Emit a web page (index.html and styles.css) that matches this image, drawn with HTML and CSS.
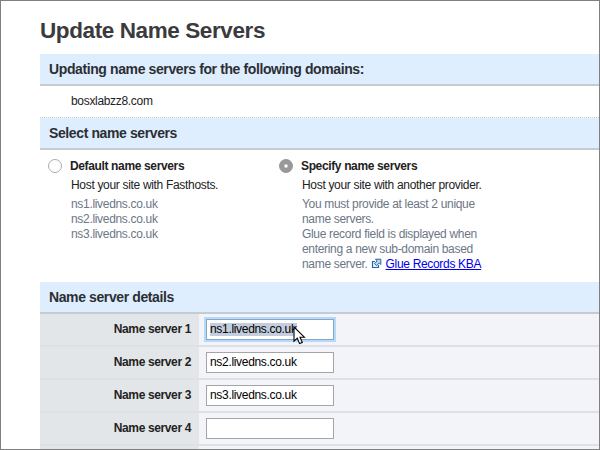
FILE: index.html
```html
<!DOCTYPE html>
<html lang="en">
<head>
<meta charset="utf-8">
<title>Update Name Servers</title>
<link rel="stylesheet" href="styles.css">
</head>
<body>
<main class="page">
  <h1 class="title">Update Name Servers</h1>
  <h2 class="section">Updating name servers for the following domains:</h2>
  <p class="domain">bosxlabzz8.com</p>
  <h2 class="section">Select name servers</h2>
  <div class="choices">
    <div class="choice choice-default">
      <span class="radio"></span>
      <div class="choice-body">
        <h3 class="choice-title">Default name servers</h3>
        <p class="lead">Host your site with Fasthosts.</p>
        <p class="note">ns1.livedns.co.uk<br>ns2.livedns.co.uk<br>ns3.livedns.co.uk</p>
      </div>
    </div>
    <div class="choice">
      <span class="radio radio-on"></span>
      <div class="choice-body">
        <h3 class="choice-title">Specify name servers</h3>
        <p class="lead">Host your site with another provider.</p>
        <p class="note">You must provide at least 2 unique<br>name servers.<br>Glue record field is displayed when<br>entering a new sub-domain based<br>name server. <svg class="ext" viewBox="0 0 11 11"><path d="M4 3.5H1.5v6h6V7" fill="#e4f0fa" stroke="#2864a8" stroke-width="1.2"/><path d="M4.5 1.2h5.3v5.3L8.2 5 5.6 7.6 3.6 5.6 6.2 3z" fill="#b8d8f0" stroke="#2864a8"/></svg><a class="link" href="#">Glue Records KBA</a></p>
      </div>
    </div>
  </div>
  <h2 class="section">Name server details</h2>
  <div class="rows">
    <div class="row"><span class="label">Name server 1</span><div class="cell"><div class="field focused"><span class="selected">ns1.livedns.co.uk</span></div></div></div>
    <div class="row"><span class="label">Name server 2</span><div class="cell"><div class="field">ns2.livedns.co.uk</div></div></div>
    <div class="row"><span class="label">Name server 3</span><div class="cell"><div class="field">ns3.livedns.co.uk</div></div></div>
    <div class="row"><span class="label">Name server 4</span><div class="cell"><div class="field"></div></div></div>
    <div class="row"><span class="label"></span><div class="cell"></div></div>
  </div>
</main>
<svg class="cursor" viewBox="0 0 13 19"><path d="M1 1v14.2l3.3-3 2.3 5.4 2.7-1.1L7 11.2h4.4z" fill="#fff" stroke="#000" stroke-width="1.1"/></svg>
</body>
</html>
```
FILE: styles.css
```css
* { box-sizing: border-box; }
body {
  margin: 0;
  width: 600px;
  height: 450px;
  overflow: hidden;
  position: relative;
  background: #fff;
  font: 12px/15px "Liberation Sans", Arial, sans-serif;
  letter-spacing: -0.32px;
  color: #222;
}
h1, h2, h3, p { margin: 0; }
.page {
  height: 450px;
  overflow: hidden;
  border: 1px solid #808080;
  padding-left: 39px;
}
.title {
  height: 53px;
  padding-top: 17px;
  font-size: 22.5px;
  letter-spacing: -0.4px;
  line-height: 26px;
  color: #3b3b3d;
  white-space: nowrap;
}
.section {
  height: 32px;
  padding-left: 9px;
  border-bottom: 2px solid #c5cbd0;
  background: #deeeff;
  font-size: 14px;
  letter-spacing: -0.39px;
  line-height: 31px;
  color: #2c2e33;
}
.domain {
  height: 32px;
  padding-left: 31px;
  border-bottom: 1px dotted #ccc;
  line-height: 31px;
}
.choices {
  display: flex;
  height: 132px;
  padding: 9px 0 0 8px;
}
.choice { display: flex; gap: 8px; }
.choice-default { width: 231px; }
.radio {
  width: 14px;
  height: 14px;
  border: 1px solid #acacac;
  border-radius: 50%;
}
.radio-on {
  border-color: #959595;
  background: radial-gradient(circle, #fff 1px, #999 2.3px);
}
.choice-title { font-size: 12px; line-height: 15px; letter-spacing: -0.36px; }
.lead { margin-top: 3px; padding-left: 1px; line-height: 17px; }
.note { margin-top: 3px; padding-left: 1px; color: #6c7686; }
.ext {
  width: 11px;
  height: 11px;
  margin: 0 4px 0 0;
  vertical-align: -1px;
}
.link { color: #0000ee; }
.row {
  display: flex;
  height: 33px;
  border-bottom: 2px solid #dfe0e3;
  background: #f3f4f9;
}
.label {
  width: 159px;
  padding-right: 8px;
  background: #e3e6e9;
  font-weight: bold;
  letter-spacing: -0.37px;
  line-height: 31px;
  text-align: right;
}
.cell { padding: 5px 0 0 7px; }
.field {
  width: 128px;
  height: 21px;
  padding-left: 3px;
  border: 1px solid #a5a5a5;
  background: #fff;
  color: #000;
  line-height: 19px;
}
.focused { border-color: #8fa5b8; box-shadow: 0 0 0 2px #b3d9ff; }
.selected {
  display: inline-block;
  height: 13px;
  background: #c3cddd;
  line-height: 13px;
}
.cursor {
  position: absolute;
  left: 293px;
  top: 326px;
  width: 13px;
  height: 19px;
}
```
